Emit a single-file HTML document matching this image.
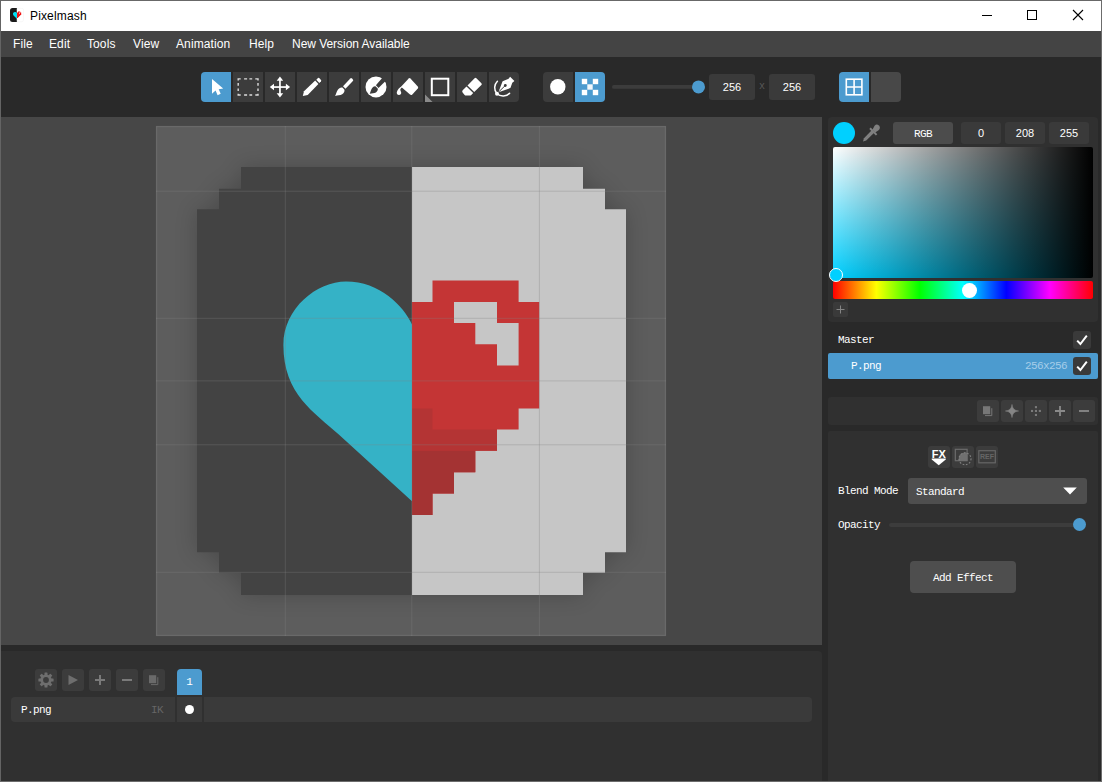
<!DOCTYPE html>
<html lang="en">
<head>
<meta charset="utf-8">
<title>Pixelmash</title>
<style>
*{box-sizing:border-box;margin:0;padding:0}
html,body{width:1102px;height:782px;overflow:hidden;background:#292929}
body{position:relative;font-family:"Liberation Sans",sans-serif;font-size:12px;color:#fff}
.abs{position:absolute}
#win{position:absolute;left:0;top:0;width:1102px;height:782px;background:#292929;overflow:hidden}
#titlebar{left:1px;top:1px;width:1100px;height:30px;background:#fff;color:#000}
#titlebar .ttl{left:29px;top:8px;font-size:12px;line-height:14px;color:#000;letter-spacing:.15px}
#menubar{left:1px;top:31px;width:1100px;height:26px;background:#444}
#menubar span{position:absolute;top:6px;font-size:12px;line-height:14px;color:#fff;white-space:nowrap;letter-spacing:.1px}
#toolbar{left:1px;top:57px;width:1100px;height:60px;background:#292929}
.tb{position:absolute;top:72px;width:30px;height:30px;background:#3c3c3c}
.tb.sel{background:#4c9bcf}
.tb svg{position:absolute;left:0;top:0;width:30px;height:30px}
.num{position:absolute;background:#3a3a3a;border-radius:3px;color:#fff;font-size:11px;text-align:center;font-family:"Liberation Sans",sans-serif}
#workarea{left:1px;top:117px;width:821px;height:528px;background:#474747}
.panel{position:absolute;background:#303030;border-radius:3px}
.mono{font-family:"Liberation Mono",monospace;font-size:11px;letter-spacing:-.6px;white-space:nowrap;line-height:12px}
.sbtn{position:absolute;width:22px;height:22px;background:#3c3c3c;border-radius:3px}
.sbtn svg{position:absolute;left:0;top:0;width:22px;height:22px}
.chk{position:absolute;width:18px;height:18px;background:#3a3a3a;border-radius:3px}
.chk svg{position:absolute;left:0;top:0;width:18px;height:18px}
</style>
</head>
<body>
<div id="win">
  <!-- window border -->
  <div class="abs" style="left:0;top:0;width:1102px;height:1px;background:#686868"></div>
  <div class="abs" style="left:0;top:0;width:1px;height:782px;background:#646464"></div>
  <div class="abs" style="left:1101px;top:0;width:1px;height:782px;background:#6c6c6c"></div>
  <div class="abs" style="left:0;top:781px;width:1102px;height:1px;background:#6c6c6c"></div>

  <!-- TITLE BAR -->
  <div id="titlebar" class="abs">
    <svg class="abs" style="left:8px;top:6px" width="18" height="18" viewBox="9 7 18 18">
      <path d="M17 8H12.5Q10 8 10 10.5V19.5Q10 22 12.5 22H17Z" fill="#1a1a1a"/>
      <path d="M17 8.3H21.5Q23.5 8.3 23.5 10.3V19.7Q23.5 21.7 21.5 21.7H17Z" fill="#fff" stroke="#f1f1f1" stroke-width=".5"/>
      <path d="M17 13.2C16.2 11.8 14.2 11.6 13.3 12.8C12.6 13.8 13 15 14 16L17 18.8Z" fill="#00e0f5"/>
      <path d="M17 12.4H18V11.4H20.2V12.4H21.2V15H20.2V16H19.2V17H18.2V18H17Z" fill="#f01515"/>
      <rect x="19" y="12.6" width="1" height="1" fill="#fff"/>
    </svg>
    <div class="abs ttl">Pixelmash</div>
    <svg class="abs" style="left:960px;top:0" width="140" height="30" viewBox="961 1 140 30" shape-rendering="crispEdges">
      <rect x="982" y="15" width="10" height="1" fill="#000"/>
      <rect x="1027.5" y="10.5" width="9" height="9" fill="none" stroke="#000" stroke-width="1"/>
      <path d="M1073 10L1083 20M1083 10L1073 20" stroke="#000" stroke-width="1.1" fill="none" shape-rendering="auto"/>
    </svg>
  </div>

  <!-- MENU BAR -->
  <div id="menubar" class="abs">
    <span style="left:12px">File</span>
    <span style="left:48px">Edit</span>
    <span style="left:86px">Tools</span>
    <span style="left:132px">View</span>
    <span style="left:175px">Animation</span>
    <span style="left:248px">Help</span>
    <span style="left:291px;letter-spacing:-.04px">New Version Available</span>
  </div>

  <!-- TOOLBAR -->
  <div id="toolbar" class="abs"></div>
  <svg class="abs" style="left:195px;top:64px" width="720" height="48" viewBox="195 64 720 48">
    <!-- tool buttons -->
    <path d="M205 72H231V102H205Q201 102 201 98V76Q201 72 205 72Z" fill="#4c9bcf"/>
    <g fill="#3c3c3c">
      <rect x="233" y="72" width="30" height="30"/><rect x="265" y="72" width="30" height="30"/>
      <rect x="297" y="72" width="30" height="30"/><rect x="329" y="72" width="30" height="30"/>
      <rect x="361" y="72" width="30" height="30"/><rect x="393" y="72" width="30" height="30"/>
      <rect x="425" y="72" width="30" height="30"/><rect x="457" y="72" width="30" height="30"/>
      <path d="M489 72H515Q519 72 519 76V98Q519 102 515 102H489Z"/>
      <path d="M547 72H573V102H547Q543 102 543 98V76Q543 72 547 72Z"/>
    </g>
    <!-- arrow -->
    <path d="M212 79V93.8L215.6 90.4L217.6 95.2L220.7 93.8L218.7 89.2L223.2 88.6Z" fill="#fff"/>
    <!-- marquee -->
    <path d="M237.5 78.9H240.7M244.1 78.9H247.1M249.4 78.9H252.2M255.3 78.9H258.7M237.5 95.0H240.7M244.1 95.0H247.1M249.4 95.0H252.2M255.3 95.0H258.7M238.2 78.2V80.4M238.2 83.0V85.7M238.2 88.4V91.1M238.2 93.8V95.7M258.0 78.2V80.4M258.0 83.0V85.7M258.0 88.4V91.1M258.0 93.8V95.7" fill="none" stroke="#dcdcdc" stroke-width="1.4"/>
    <!-- move -->
    <g fill="#fff">
      <rect x="279.1" y="79" width="1.7" height="16"/><rect x="272" y="86.2" width="16" height="1.7"/>
      <path d="M279.95 76.6L283.2 80.8H276.7Z"/><path d="M279.95 97.4L283.2 93.2H276.7Z"/>
      <path d="M269.8 87.05L274 83.8V90.3Z"/><path d="M290.1 87.05L285.9 83.8V90.3Z"/>
    </g>
    <!-- pencil -->
    <g fill="#fff">
      <path d="M302.8 95.9L304 91.2L315.2 80.6L318.4 83.9L307.7 95Z"/>
      <path d="M316.3 79.8L318 78.1Q318.6 77.6 319.2 78.1L321 80Q321.5 80.6 321 81.2L319.3 82.9Z"/>
    </g>
    <!-- brush -->
    <g fill="#fff">
      <path d="M343 86.3L350.3 78.4Q351.1 77.7 351.9 78.4L352.9 79.4Q353.6 80.2 352.9 81L345.5 88.7Z"/>
      <path d="M335.1 95.9C336.2 93.7 336.4 91.8 337.7 89.9C338.9 88 340.9 87 342.4 87.6L344.3 89.6C345 91.2 344 93.1 342.2 94.2C340.2 95.3 337.6 95.3 335.1 95.9Z"/>
    </g>
    <!-- circle brush -->
    <circle cx="376" cy="86.9" r="10.5" fill="#fff"/>
    <g fill="#3c3c3c">
      <path d="M375.9 85.3L382.6 77.6L385.8 80.8L378.5 88Z"/>
      <path d="M369.7 93.7C370.7 91.7 370.9 90 372 88.3C372.9 86.8 374.3 86 375.4 86.3L377.7 88.6C378.2 89.9 377.4 91.5 375.9 92.5C374.2 93.5 372 93.3 369.7 93.7Z"/>
    </g>
    <!-- bucket -->
    <g fill="#fff">
      <path d="M401 86.8L408.7 78.5Q409.5 77.7 410.4 78.5L417.8 86.4Q418.6 87.4 417.8 88.4L412.3 94.4Q411.2 95.4 410 94.5Z"/>
      <path d="M401.4 86.6C399.6 87.6 397.3 90 396.8 92.3C396.5 93.9 397.5 95 399 95C400.5 95 401.4 93.9 401.2 92.5C401 91.2 400.2 90.4 400.3 89.4C400.4 88.7 401 88 402 87.4Z"/>
    </g>
    <!-- rect -->
    <rect x="431.8" y="78.7" width="16.5" height="16.5" fill="none" stroke="#fff" stroke-width="2"/>
    <path d="M425 94.4L432.6 102H425Z" fill="#8a8a8a"/>
    <!-- eraser -->
    <g fill="#fff">
      <path d="M467.5 85.4L474.6 78.3Q475.5 77.4 476.4 78.3L481.4 83.3Q482.3 84.2 481.4 85.1L474.2 92.1Z"/>
      <path d="M466.5 86.4L473.2 93.1L471.3 95Q470.7 95.6 469.9 95.6H466Q465.2 95.6 464.6 95L462.6 92.4Q461.7 91.2 462.7 90.2Z"/>
    </g>
    <!-- pen -->
    <g>
      <path d="M498.7 91.5L502.6 81.2L508.6 78.8L510.1 76.7L514.4 80.9L512.3 82.7L510.4 88L499.3 91.9Z" fill="#fff"/>
      <circle cx="505.3" cy="85.5" r="1.4" fill="#3c3c3c"/>
      <path d="M505.3 85.5L499 91.6" stroke="#3c3c3c" stroke-width="1" fill="none"/>
      <path d="M497.4 81.2C494 84.5 493.8 90 496.8 93.4" stroke="#fff" stroke-width="1.5" fill="none" stroke-linecap="round"/>
      <path d="M497 93.8C500.5 97 506.5 96.8 509.6 93.3" stroke="#fff" stroke-width="1.5" fill="none" stroke-linecap="round"/>
      <circle cx="497" cy="93.7" r="2" fill="#fff"/>
    </g>
    <!-- shape buttons -->
    <circle cx="557.8" cy="86.8" r="7.7" fill="#fff"/>
    <path d="M575 72H601Q605 72 605 76V98Q605 102 601 102H575Z" fill="#4c9bcf"/>
    <g fill="#fff">
      <rect x="581.8" y="78.8" width="5.4" height="5.4"/><rect x="592.8" y="78.8" width="5.4" height="5.4"/>
      <rect x="587.3" y="84.3" width="5.4" height="5.4" fill-opacity=".93"/>
      <rect x="581.8" y="89.8" width="5.4" height="5.4"/><rect x="592.8" y="89.8" width="5.4" height="5.4"/>
    </g>
    <!-- slider -->
    <rect x="612" y="85" width="88" height="3.8" rx="1.9" fill="#3c3c3c"/>
    <circle cx="698.5" cy="86.9" r="6.5" fill="#4c9bcf"/>
    <!-- grid buttons -->
    <path d="M843 72H869V102H843Q839 102 839 98V76Q839 72 843 72Z" fill="#4c9bcf"/>
    <path d="M871 72H897Q901 72 901 76V98Q901 102 897 102H871Z" fill="#484848"/>
    <g fill="none" stroke="#fff" stroke-width="1.6">
      <rect x="846.3" y="79.2" width="15.6" height="15.6"/>
      <path d="M854.1 79.2V94.8M846.3 87H861.9"/>
    </g>
  </svg>
  <div class="num" style="left:709px;top:74px;width:46px;height:26px;line-height:26px">256</div>
  <div class="abs mono" style="left:759px;top:81px;color:#585858;font-size:10px">x</div>
  <div class="num" style="left:769px;top:74px;width:46px;height:26px;line-height:26px">256</div>

  <!-- WORK AREA -->
  <div id="workarea" class="abs"></div>
  <svg class="abs" style="left:150px;top:120px" width="522" height="522" viewBox="150 120 522 522">
    <defs>
      <filter id="sh" x="-20%" y="-20%" width="140%" height="140%"><feGaussianBlur stdDeviation="11"/></filter>
      <clipPath id="cv"><rect x="156" y="126" width="510" height="510"/></clipPath>
    </defs>
    <rect x="156" y="126" width="510" height="510" fill="#5d5d5d"/>
    <g clip-path="url(#cv)">
      <g filter="url(#sh)" opacity=".2"><path d="M412.0 167.0L241.0 167.0L241.0 188.7L219.0 188.7L219.0 209.3L197.0 209.3L197.0 552.3L219.0 552.3L219.0 572.8L241.0 572.8L241.0 595.0L412.0 595.0L412.0 595.0L583.0 595.0L583.0 572.8L605.0 572.8L605.0 552.3L626.0 552.3L626.0 209.3L605.0 209.3L605.0 188.7L583.0 188.7L583.0 167.0L412.0 167.0Z" fill="#000"/></g>
      <path d="M412.0 167.0L241.0 167.0L241.0 188.7L219.0 188.7L219.0 209.3L197.0 209.3L197.0 552.3L219.0 552.3L219.0 572.8L241.0 572.8L241.0 595.0L412.0 595.0Z" fill="#434343"/>
      <path d="M412.0 167.0L583.0 167.0L583.0 188.7L605.0 188.7L605.0 209.3L626.0 209.3L626.0 552.3L605.0 552.3L605.0 572.8L583.0 572.8L583.0 595.0L412.0 595.0Z" fill="#c6c6c6"/>
      <path d="M412 324.4C403.3 305.9 380 281.6 346 281.6C317 281.6 283.4 308.2 283.4 345C283.4 394.3 314.6 412.5 338.5 434.3L412 501.3Z" fill="#35b2c6"/>
      <path d="M412.0 302.0L432.5 302.0L432.5 280.4L518.6 280.4L518.6 302.0L539.2 302.0L539.2 408.6L518.6 408.6L518.6 429.5L497.0 429.5L497.0 450.8L475.3 450.8L475.3 472.2L454.0 472.2L454.0 493.4L432.5 493.4L432.5 515.0L412.0 515.0Z" fill="#c43535"/>
      <path d="M454.0 302.0L497.0 302.0L497.0 323.0L518.6 323.0L518.6 365.4L497.0 365.4L497.0 344.3L475.3 344.3L475.3 323.0L454.0 323.0Z" fill="#c6c6c6"/>
      <path d="M412.0 408.6L432.5 408.6L432.5 429.5L497.0 429.5L497.0 450.8L412.0 450.8Z" fill="#b43434"/>
      <path d="M412.0 450.8L475.3 450.8L475.3 472.2L454.0 472.2L454.0 493.4L432.5 493.4L432.5 515.0L412.0 515.0Z" fill="#a43333"/>
      <g fill="#828282" fill-opacity=".32">
        <rect x="156" y="190.7" width="510" height="1"/><rect x="156" y="317.8" width="510" height="1"/>
        <rect x="156" y="380.4" width="510" height="1"/><rect x="156" y="444.3" width="510" height="1"/>
        <rect x="156" y="571.8" width="510" height="1"/>
        <rect x="284.8" y="126" width="1" height="510"/><rect x="411.3" y="126" width="1" height="510"/><rect x="538.9" y="126" width="1" height="510"/>
      </g>
    </g>
    <rect x="156.5" y="126.5" width="509" height="509" fill="none" stroke="#fff" stroke-opacity=".08" stroke-width="1.4"/>
  </svg>

  <!-- TIMELINE -->
  <div class="panel" style="left:1px;top:651px;width:821px;height:130px;border-radius:0 4px 0 0"></div>
  <div class="sbtn" style="left:35px;top:669px"><svg viewBox="0 0 22 22"><g fill="#6e6e6e"><circle cx="11" cy="11" r="5.6"/><g id="gt"><rect x="9.5" y="3.4" width="3" height="15.2" rx=".6"/></g><rect x="9.5" y="3.4" width="3" height="15.2" rx=".6" transform="rotate(45 11 11)"/><rect x="9.5" y="3.4" width="3" height="15.2" rx=".6" transform="rotate(90 11 11)"/><rect x="9.5" y="3.4" width="3" height="15.2" rx=".6" transform="rotate(135 11 11)"/></g><circle cx="11" cy="11" r="2.9" fill="#3c3c3c"/></svg></div>
  <div class="sbtn" style="left:62px;top:669px"><svg viewBox="0 0 22 22"><path d="M6.5 6L16 11L6.5 16Z" fill="#6e6e6e"/></svg></div>
  <div class="sbtn" style="left:89px;top:669px"><svg viewBox="0 0 22 22"><path d="M6 11H16M11 6V16" stroke="#7a7a7a" stroke-width="2" fill="none"/></svg></div>
  <div class="sbtn" style="left:116px;top:669px"><svg viewBox="0 0 22 22"><path d="M6 11H16" stroke="#7a7a7a" stroke-width="2" fill="none"/></svg></div>
  <div class="sbtn" style="left:143px;top:669px"><svg viewBox="0 0 22 22"><path d="M8 15.6H14.8V8.2" stroke="#6a6a6a" stroke-width="1" fill="none"/><rect x="6" y="6.2" width="7.2" height="8" fill="#6a6a6a"/></svg></div>
  <div class="abs" style="left:177px;top:669px;width:25px;height:26px;background:#4c9bcf;border-radius:4px 4px 0 0;text-align:center"><span class="mono" style="line-height:26px;color:#fff;letter-spacing:0">1</span></div>
  <div class="abs" style="left:11px;top:697px;width:164px;height:25px;background:#3a3a3a;border-radius:4px 0 0 4px"></div>
  <div class="abs mono" style="left:21px;top:704px;color:#fff">P.png</div>
  <div class="abs mono" style="left:151px;top:704px;color:#666">IK</div>
  <div class="abs" style="left:177px;top:697px;width:25px;height:25px;background:#3a3a3a"></div>
  <div class="abs" style="left:185px;top:705px;width:9px;height:9px;border-radius:50%;background:#fff"></div>
  <div class="abs" style="left:204px;top:697px;width:608px;height:25px;background:#3a3a3a;border-radius:0 4px 4px 0"></div>

  <!-- RIGHT PANELS -->
  <div class="panel" style="left:828px;top:117px;width:270px;height:205px;border-radius:4px"></div>
  <div class="abs" style="left:833px;top:122px;width:22px;height:22px;border-radius:50%;background:#00d0ff"></div>
  <svg class="abs" style="left:861px;top:122px" width="22" height="22" viewBox="861 122 22 22">
    <g fill="#808080">
      <path d="M872 130L874.4 132.4L866.2 140.5L863 141.4L864 138.2Z"/>
      <path d="M870.7 127.6L877.3 134.2L875.9 135.6L869.3 129Z"/>
      <path d="M872.4 129.7L874.6 125.8Q876.5 123.6 878.9 125.4Q880.9 127.6 878.9 129.9L875.2 132.5Z"/>
    </g>
  </svg>
  <div class="abs mono" style="left:893px;top:122px;width:60px;height:22px;line-height:24px;background:#4c4c4c;border-radius:3px;text-align:center;color:#fff">RGB</div>
  <div class="num" style="left:961px;top:122px;width:40px;height:22px;line-height:22px">0</div>
  <div class="num" style="left:1005px;top:122px;width:40px;height:22px;line-height:22px">208</div>
  <div class="num" style="left:1049px;top:122px;width:40px;height:22px;line-height:22px">255</div>
  <div class="abs" style="left:833px;top:147px;width:260px;height:131px;border-radius:2px;background:linear-gradient(to right,rgba(0,0,0,0),#000),linear-gradient(to bottom,#fff,#00d0ff)"></div>
  <div class="abs" style="left:833px;top:281px;width:260px;height:18px;border-radius:2px;background:linear-gradient(to right,#f00 0%,#ff0 16.67%,#0f0 33.33%,#0ff 50%,#00f 66.67%,#f0f 83.33%,#f00 100%)"></div>
  <div class="abs" style="left:829px;top:268px;width:14px;height:14px;border-radius:50%;background:#00d0ff;border:1.5px solid #fff"></div>
  <div class="abs" style="left:962.2px;top:282.6px;width:15px;height:15px;border-radius:50%;background:#fff"></div>
  <div class="abs" style="left:833px;top:302px;width:15px;height:15px;background:#3a3a3a;border-radius:2px"><svg class="abs" style="left:0;top:0" width="15" height="15" viewBox="0 0 15 15"><path d="M3.5 7.5H11.5M7.5 3.5V11.5" stroke="#858585" stroke-width="1" fill="none"/></svg></div>

  <!-- layers -->
  <div class="abs mono" style="left:838px;top:334px;color:#fff">Master</div>
  <div class="chk" style="left:1073px;top:331px"><svg viewBox="0 0 18 18"><path d="M4.2 9.6L7.4 13L13.8 4.6" stroke="#fff" stroke-width="2" fill="none"/></svg></div>
  <div class="abs" style="left:828px;top:353px;width:270px;height:26px;background:#4c9bcf;border-radius:2px"></div>
  <div class="abs mono" style="left:851px;top:360px;color:#fff">P.png</div>
  <div class="abs mono" style="left:1025px;top:360px;color:#a5cde9">256x256</div>
  <div class="chk" style="left:1073px;top:357px"><svg viewBox="0 0 18 18"><path d="M4.2 9.6L7.4 13L13.8 4.6" stroke="#fff" stroke-width="2" fill="none"/></svg></div>

  <div class="panel" style="left:828px;top:397px;width:270px;height:28px"></div>
  <div class="sbtn" style="left:977px;top:400px"><svg viewBox="0 0 22 22"><path d="M8 15.6H14.8V8.2" stroke="#777" stroke-width="1" fill="none"/><rect x="6" y="6.2" width="7.2" height="8" fill="#777"/></svg></div>
  <div class="sbtn" style="left:1001px;top:400px"><svg viewBox="0 0 22 22"><path d="M11 4.4Q11.5 10.5 17.6 11Q11.5 11.5 11 17.6Q10.5 11.5 4.4 11Q10.5 10.5 11 4.4Z" fill="#858585" stroke="#858585" stroke-width=".5"/></svg></div>
  <div class="sbtn" style="left:1025px;top:400px"><svg viewBox="0 0 22 22"><g fill="#7a7a7a"><rect x="9.9" y="6.1" width="2.1" height="2.1"/><rect x="9.9" y="13.9" width="2.1" height="2.1"/><rect x="6" y="9.9" width="2.1" height="2.1"/><rect x="13.8" y="9.9" width="2.1" height="2.1"/><rect x="9.9" y="9.9" width="2.1" height="2.1"/></g></svg></div>
  <div class="sbtn" style="left:1049px;top:400px"><svg viewBox="0 0 22 22"><path d="M6 11H16M11 6V16" stroke="#8a8a8a" stroke-width="1.8" fill="none"/></svg></div>
  <div class="sbtn" style="left:1073px;top:400px"><svg viewBox="0 0 22 22"><path d="M6 11H16" stroke="#8a8a8a" stroke-width="1.8" fill="none"/></svg></div>

  <!-- effects -->
  <div class="panel" style="left:828px;top:431px;width:270px;height:350px;border-radius:2px 2px 0 0"></div>
  <div class="sbtn" style="left:928px;top:446px"><svg viewBox="0 0 22 22"><text x="10.8" y="12" text-anchor="middle" font-family="Liberation Sans,sans-serif" font-weight="bold" font-size="11" fill="#fff">FX</text><path d="M3.7 12.4H17.8V13.6L10.75 19.2L3.7 13.6Z" fill="#fff"/></svg></div>
  <div class="sbtn" style="left:952px;top:446px"><svg viewBox="0 0 22 22"><defs><clipPath id="mq"><rect x="3" y="3" width="12.4" height="12"/></clipPath></defs><rect x="3.3" y="3.3" width="11.8" height="11.4" fill="none" stroke="#6c6c6c" stroke-width="1.2"/><circle cx="13" cy="12.8" r="6.3" fill="#707070" clip-path="url(#mq)"/><circle cx="13" cy="12.8" r="6" fill="none" stroke="#808080" stroke-width="1.1" stroke-dasharray="1.7 1.6"/></svg></div>
  <div class="sbtn" style="left:976px;top:446px"><svg viewBox="0 0 22 22"><rect x="2.8" y="4.7" width="16.5" height="12.1" fill="none" stroke="#666" stroke-width="1.2"/><text x="11.05" y="13.4" text-anchor="middle" font-family="Liberation Sans,sans-serif" font-weight="bold" font-size="7" fill="#666">REF</text></svg></div>
  <div class="abs mono" style="left:838px;top:485px;color:#fff">Blend Mode</div>
  <div class="abs" style="left:908px;top:478px;width:179px;height:26px;background:#4e4e4e;border-radius:3px"></div>
  <div class="abs mono" style="left:916px;top:486px;color:#fff">Standard</div>
  <svg class="abs" style="left:1060px;top:484px" width="20" height="14" viewBox="1060 484 20 14"><path d="M1063.2 487.6H1076.8L1070 494.4Z" fill="#fff"/></svg>
  <div class="abs mono" style="left:838px;top:519px;color:#fff">Opacity</div>
  <div class="abs" style="left:889px;top:523px;width:196px;height:4px;border-radius:2px;background:#3c3c3c"></div>
  <div class="abs" style="left:1073px;top:518px;width:13px;height:13px;border-radius:50%;background:#4c9bcf"></div>
  <div class="abs mono" style="left:910px;top:561px;width:106px;height:32px;line-height:34px;background:#4e4e4e;border-radius:4px;text-align:center;color:#fff">Add Effect</div>
</div>
</body>
</html>
